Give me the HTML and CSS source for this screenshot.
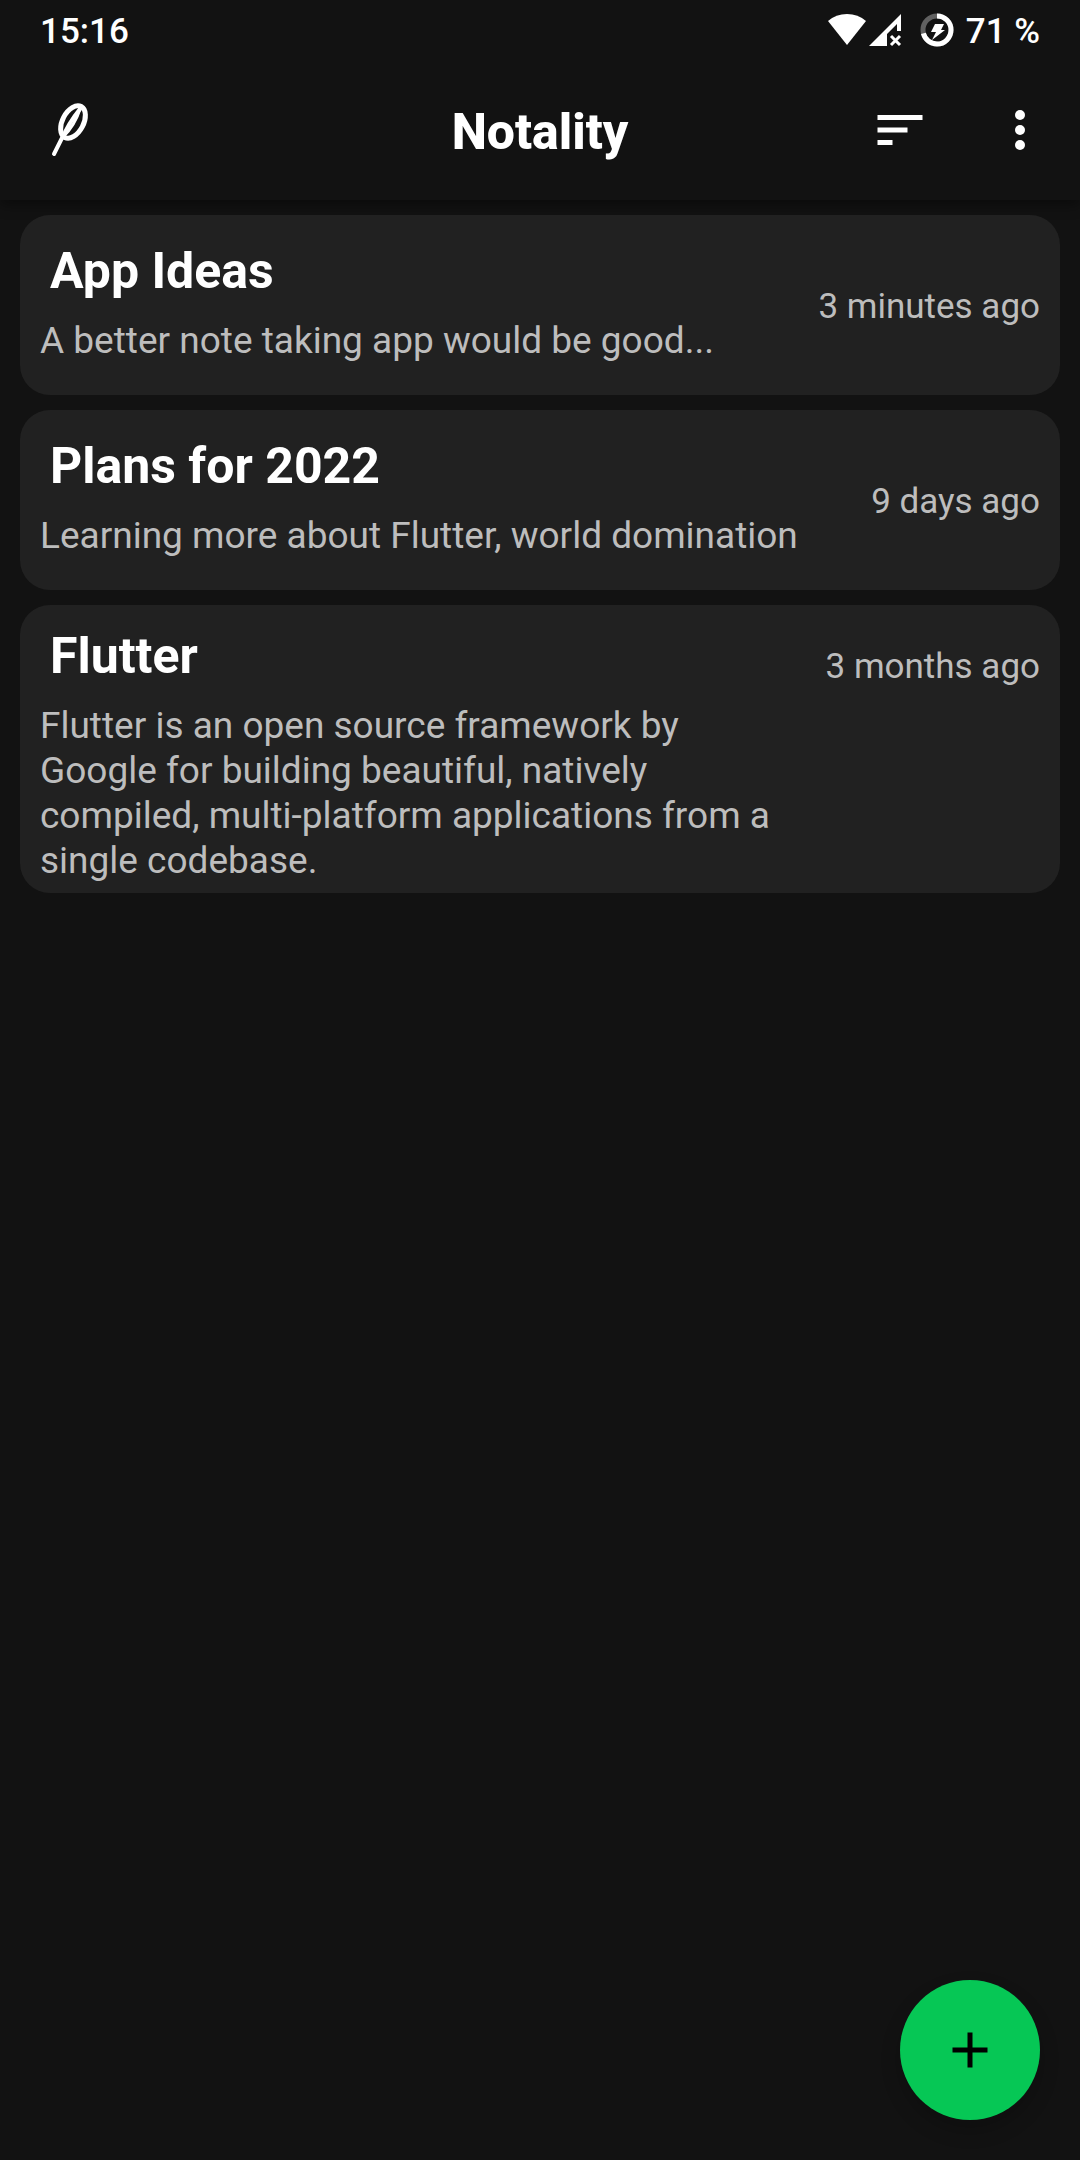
FILE: index.html
```
<!DOCTYPE html>
<html lang="en">
<head>
<meta charset="utf-8">
<meta name="viewport" content="width=device-width, initial-scale=1">
<title>Notality</title>
<link rel="stylesheet" href="styles.css">
</head>
<body>
<header class="header">
  <div class="status-bar">
    <time class="status-time">15:16</time>
    <div class="status-icons">
      <svg class="status-signals" viewBox="0 0 76 36" aria-hidden="true">
        <path fill="#fff" d="M1 9Q9 2 20 2T39 9L20 33z"/>
        <path fill="#fff" d="M42 34L74 2V19H70V12L60 22V34z"/>
        <path stroke="#fff" stroke-width="3" d="M64 24l9 9M73 24l-9 9"/>
      </svg>
      <svg class="status-battery" viewBox="0 0 36 36" aria-hidden="true">
        <circle cx="18" cy="18" r="14" fill="none" stroke="#616161" stroke-width="5"/>
        <circle cx="18" cy="18" r="14" fill="none" stroke="#fff" stroke-width="5" pathLength="100" stroke-dasharray="71 29" transform="rotate(-90 18 18)"/>
        <path fill="#fff" d="M16 12h9l-3 6h4L13 28l4-8h-5z"/>
      </svg>
      <span class="status-level">71 %</span>
    </div>
  </div>
  <div class="app-bar">
    <div class="app-logo">
      <svg class="icon" viewBox="0 0 60 60" aria-hidden="true">
        <g fill="none" stroke="#fff" stroke-linecap="round">
          <ellipse cx="33" cy="22" rx="10.500" ry="17.500" stroke-width="5" transform="rotate(28 33 22)"/>
          <path stroke-width="4" d="M14 54L22 38M23 37Q28 24 40 9"/>
          <path stroke-width="3" d="M23 37Q35 25 40 9"/>
        </g>
      </svg>
    </div>
    <h1 class="app-title">Notality</h1>
    <div class="app-actions">
      <button class="icon-button" type="button" aria-label="Sort notes">
        <svg class="icon" viewBox="0 0 24 24" aria-hidden="true"><path fill="currentColor" d="M3 18h6v-2H3v2zM3 6v2h18V6H3zm0 7h12v-2H3v2z"/></svg>
      </button>
      <button class="icon-button" type="button" aria-label="More options">
        <svg class="icon" viewBox="0 0 24 24" aria-hidden="true"><g fill="currentColor"><circle cx="12" cy="6" r="2"/><circle cx="12" cy="12" r="2"/><circle cx="12" cy="18" r="2"/></g></svg>
      </button>
    </div>
  </div>
</header>
<main class="notes">
  <article class="note">
    <div class="note-body">
      <h2 class="note-title">App Ideas</h2>
      <p class="note-text">A better note taking app would be good...</p>
    </div>
    <time class="note-age">3 minutes ago</time>
  </article>
  <article class="note">
    <div class="note-body">
      <h2 class="note-title">Plans for 2022</h2>
      <p class="note-text">Learning more about Flutter, world domination</p>
    </div>
    <time class="note-age">9 days ago</time>
  </article>
  <article class="note note-long">
    <div class="note-body">
      <h2 class="note-title">Flutter</h2>
      <p class="note-text">Flutter is an open source framework by Google for building beautiful, natively compiled, multi-platform applications from a single codebase.</p>
    </div>
    <time class="note-age">3 months ago</time>
  </article>
</main>
<button class="add-button" type="button" aria-label="Add note">
  <svg class="icon" viewBox="0 0 24 24" aria-hidden="true"><path fill="currentColor" d="M19 13h-6v6h-2v-6H5v-2h6V5h2v6h6v2z"/></svg>
</button>
</body>
</html>
```
FILE: styles.css
```
* {
  box-sizing: border-box;
}

body {
  margin: 0;
  min-height: 100vh;
  background: #121212;
  color: #fff;
  font-family: Roboto, "Liberation Sans", sans-serif;
}

h1, h2, p {
  margin: 0;
}

button {
  padding: 0;
  border: 0;
  background: none;
  color: inherit;
  font: inherit;
  cursor: pointer;
}

.icon {
  display: block;
  width: 60px;
  height: 60px;
}

.header {
  background: #121212;
  box-shadow: 0 5px 12px rgba(0, 0, 0, 0.4);
}

.status-bar {
  display: flex;
  align-items: center;
  justify-content: space-between;
  height: 60px;
  padding: 0 40px;
  font-size: 35px;
  font-weight: 500;
  line-height: 56px;
}

.status-time,
.status-level {
  padding-top: 3px;
}

.status-icons {
  display: flex;
  align-items: center;
}

.status-signals {
  width: 76px;
  height: 36px;
  margin-right: 16px;
}

.status-battery {
  width: 36px;
  height: 36px;
  margin-right: 11px;
}

.app-bar {
  display: grid;
  grid-template-columns: 1fr auto 1fr;
  align-items: center;
  height: 140px;
}

.app-logo {
  padding-left: 40px;
}

.app-title {
  padding-top: 3px;
  font-size: 50px;
  font-weight: 800;
  line-height: 60px;
}

.app-actions {
  display: flex;
  justify-content: flex-end;
}

.icon-button {
  display: grid;
  place-items: center;
  width: 120px;
  height: 120px;
}

.notes {
  display: flex;
  flex-direction: column;
  gap: 15px;
  padding: 15px 20px;
}

.note {
  display: grid;
  grid-template-columns: 1fr auto;
  align-items: center;
  gap: 40px;
  min-height: 180px;
  padding: 0 20px;
  border-radius: 30px;
  background: #212121;
}

.note-body {
  padding-bottom: 6px;
}

.note-title {
  padding-left: 10px;
  font-size: 50px;
  font-weight: 700;
  line-height: 60px;
}

.note-text {
  margin-top: 17px;
  color: #bdbdbd;
  font-size: 37px;
  line-height: 45px;
}

.note-age {
  padding-top: 3px;
  color: #bdbdbd;
  font-size: 35px;
  line-height: 42px;
}

.note-long {
  align-items: start;
  padding-top: 21px;
}

.note-long .note-body {
  padding-bottom: 10px;
}

.note-long .note-age {
  padding-top: 20px;
}

.add-button {
  position: fixed;
  right: 40px;
  bottom: 40px;
  display: grid;
  place-items: center;
  width: 140px;
  height: 140px;
  border-radius: 50%;
  background: #06c755;
  color: #000;
  box-shadow: 0 10px 20px rgba(0, 0, 0, 0.2);
}
```
